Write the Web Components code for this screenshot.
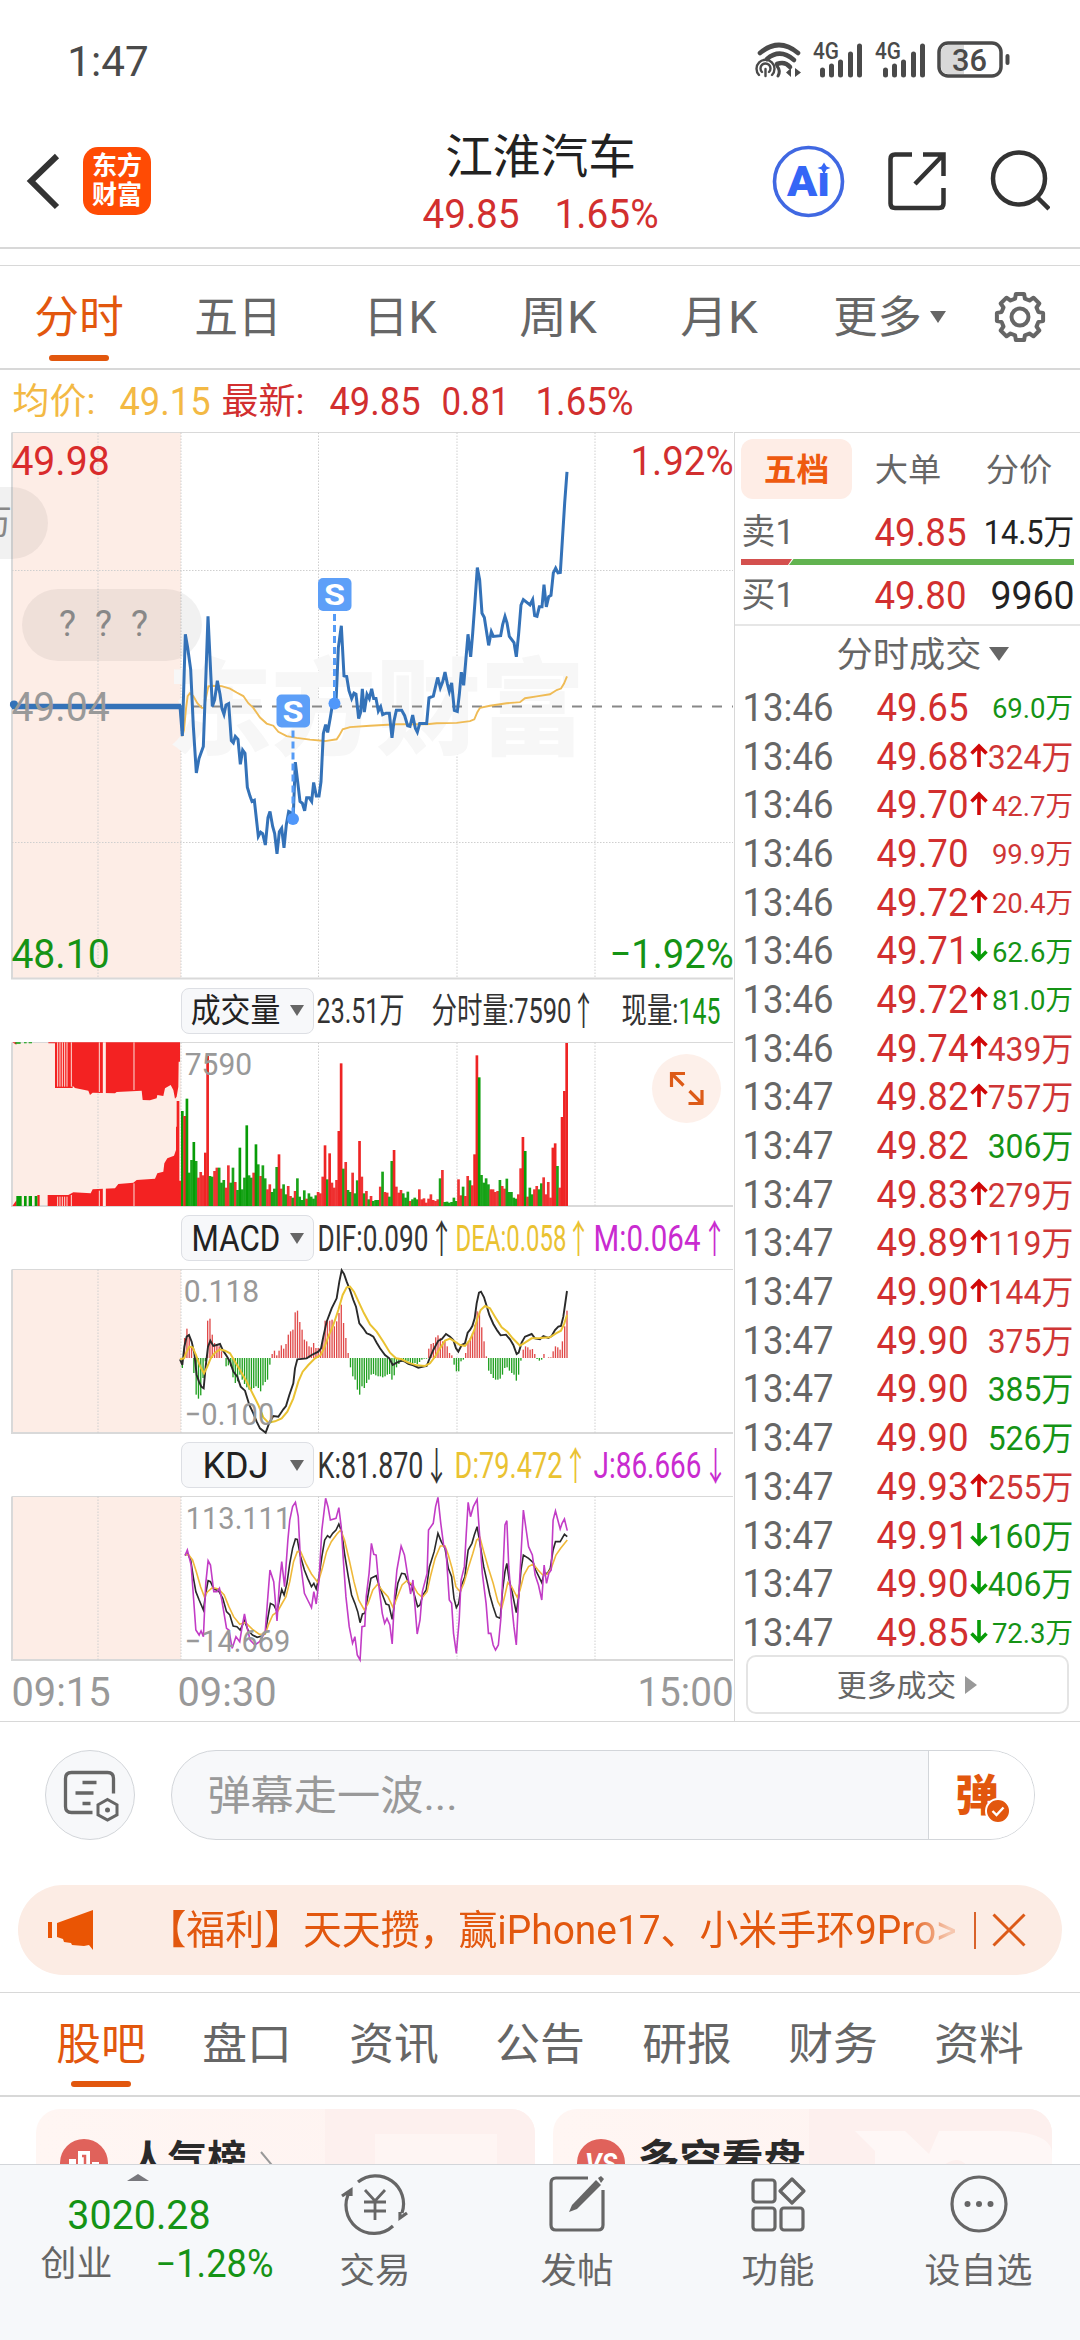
<!DOCTYPE html>
<html lang="zh-CN">
<head>
<meta charset="utf-8">
<title>江淮汽车</title>
<style>
    html, body { margin: 0; padding: 0; }
    body {
        width: 1080px;
        height: 2340px;
        overflow: hidden;
        background: #fff;
        font-family: Roboto, "Noto Sans CJK SC", sans-serif;
        --red: #d22f2f;
        --green: #159315;
        --orange: #e2570e;
        --gray: #666;
        --line: #d8d8d8;
    }
</style>
</head>
<body>
<stock-page></stock-page>

<script>
const FONT = 'Roboto, "Noto Sans CJK SC", sans-serif';

// One line of text set to an exact width, centred on its cap height
class FitText extends HTMLElement {
    connectedCallback() {
        const w = +this.getAttribute('w');
        const s = +this.getAttribute('s');
        const c = this.getAttribute('c') || 'currentColor';
        const b = this.getAttribute('b') || 400;
        const pad = s * 0.04;
        this.attachShadow({ mode: 'open' });
        this.shadowRoot.innerHTML = `
            <style>
                :host { display: block; flex: none; width: ${w}px; height: ${s}px; }
                svg { display: block; overflow: visible; }
                text { font: ${b} ${s}px ${FONT}; white-space: pre; }
            </style>
            <svg width="${w}" height="${s}"><text x="${-pad}" y="${s * 0.86}" fill="${c}" textLength="${w + pad * 2}" lengthAdjust="spacingAndGlyphs">${this.textContent}</text></svg>
        `;
    }
}
customElements.define('fit-text', FitText);

// Shorthand used by the templates below
const t = (text, w, s, ml = 0, c = '', b = '') =>
    `<fit-text w="${w}" s="${s}" ${c && `c="${c}"`} ${b && `b="${b}"`} style="margin-left:${ml}px">${text}</fit-text>`;

class StatusBar extends HTMLElement {
    connectedCallback() {
        this.attachShadow({ mode: 'open' });
        const bars = x => [[0, 67], [9, 63], [18, 59], [28, 51], [37, 43]]
            .map(([dx, y]) => `<path d="M${x + dx + 2.5} ${y + 3}V75"/>`).join('');
        this.shadowRoot.innerHTML = `
            <style>
                :host { display: flex; align-items: center; height: 122px; padding-left: 69px; color: #4a4a4a; }
                svg { margin-left: 604px; flex: none; }
            </style>
            ${t('1:47', 78, 42)}
            <svg width="270" height="122" viewBox="750 0 270 122" fill="none" stroke="#4a4a4a" stroke-width="4.6" stroke-linecap="round">
                <path d="M759 53Q778 37 797 53"/>
                <path d="M766 59Q779 48 793 60"/>
                <path d="M776 64Q784 61 789 67"/>
                <g stroke-width="2.4">
                    <path d="M758 75a9 9 0 1 1 13 0M761 72a5 5 0 1 1 7 0M764.500 69v7"/>
                    <path d="M776 66Q780 71 777 76" stroke-width="3"/>
                </g>
                <path d="M790 68v9l-5-4.500zM794 68v9l6-4.500z" fill="#4a4a4a" stroke="none"/>
                <g stroke-width="5">${bars(819)}${bars(882)}</g>
                <rect x="938" y="43" width="62" height="33" rx="9" stroke-width="3.500"/>
                <path d="M947 45h16v29h-16q-7 0-7-8V53q0-8 7-8z" fill="#d9d9d9" stroke="none"/>
                <path d="M1006.500 56v7" stroke-width="4"/>
                <g fill="#4a4a4a" stroke="none" font-family="Roboto" font-weight="500">
                    <text x="812" y="59" font-size="23" textLength="26" lengthAdjust="spacingAndGlyphs">4G</text>
                    <text x="874" y="59" font-size="23" textLength="26" lengthAdjust="spacingAndGlyphs">4G</text>
                    <text x="951" y="71" font-size="32" textLength="35" lengthAdjust="spacingAndGlyphs">36</text>
                </g>
            </svg>
        `;
    }
}
customElements.define('status-bar', StatusBar);

class TitleBar extends HTMLElement {
    connectedCallback() {
        this.attachShadow({ mode: 'open' });
        this.shadowRoot.innerHTML = `
            <style>
                :host { display: flex; align-items: center; box-sizing: border-box; height: 127px; padding: 0 0 8px 24px; border-bottom: 2px solid var(--line); }
                svg { flex: none; display: block; }
                .logo { display: flex; flex-direction: column; justify-content: center; gap: 3px; width: 68px; height: 68px; margin-left: 19px; border-radius: 15px; background: #ff4b04; align-items: center; }
                .title { width: 233px; margin-left: 272px; padding-top: 6px; color: #222; }
                .title > div { display: flex; }
                .price { margin-top: 14px; color: var(--red); }
            </style>
            <svg width="40" height="60"><path d="M33 5L7 30l26 26" fill="none" stroke="#333" stroke-width="6"/></svg>
            <div class="logo">${t('东方', 48, 26, 0, '#fff', 700)}${t('财富', 48, 26, 0, '#fff', 700)}</div>
            <div class="title">
                <div>${t('江淮汽车', 187, 47, 24)}</div>
                <div class="price">${t('49.85', 94, 40, 1)}${t('1.65%', 101, 40, 38)}</div>
            </div>
            <svg width="280" height="80" viewBox="770 141 280 80" fill="none" stroke="#333" stroke-width="4.500" style="margin-left:114px">
                <circle cx="808.500" cy="181.500" r="34" stroke="#4068e2" stroke-width="3.600"/>
                <path d="M823.500 163l2.500 4 4 1.500-4 1.500-2.500 5-2.500-5-4-1.500 4-1.500z" fill="#3566f6" stroke="none" transform="translate(.5 -.5)"/>
                <text x="787" y="196" font-size="42" font-weight="900" font-family="Roboto" fill="#3566f6" stroke="none" textLength="43" lengthAdjust="spacingAndGlyphs">Aı</text>
                <path d="M912 154.500h-17q-4.500 0-4.500 4.500v44.500q0 4.500 4.500 4.500h44q4.500 0 4.500-4.500V188M923 154.500h20.500V176M943 155L915 184"/>
                <circle cx="1019" cy="178.500" r="26"/>
                <path d="M1037 197l12 12"/>
            </svg>
        `;
    }
}
customElements.define('title-bar', TitleBar);

class PeriodTabs extends HTMLElement {
    connectedCallback() {
        this.attachShadow({ mode: 'open' });
        // eight-toothed gear outline
        let gear = '';
        for (let i = 0; i < 8; i++) {
            [[-15, 19], [-10, 23.5], [10, 23.5], [15, 19]].forEach(([a, r]) => {
                const q = (i * 45 + a - 90) * Math.PI / 180;
                gear += `${gear ? 'L' : 'M'}${(r * Math.cos(q)).toFixed(1)} ${(r * Math.sin(q)).toFixed(1)}`;
            });
        }
        this.shadowRoot.innerHTML = `
            <style>
                :host { display: flex; align-items: center; box-sizing: border-box; height: 105px; margin-top: 16px; padding-left: 36px; border-top: 1.5px solid var(--line); border-bottom: 2px solid var(--line); color: var(--gray); }
                .on { position: relative; color: var(--orange); }
                .on::after { content: ''; position: absolute; left: 13px; top: 60px; width: 60px; height: 6px; border-radius: 3px; background: var(--orange); }
                .caret { margin-left: 10px; border: 8px solid transparent; border-top: 12px solid var(--gray); border-bottom: 0; }
                svg { margin-left: 46px; }
            </style>
            <div class="on">${t('分时', 86, 44)}</div>
            ${t('五日', 84, 44, 74)}${t('日K', 70, 44, 85)}${t('周K', 74, 44, 86)}${t('月K', 74, 44, 87)}${t('更多', 85, 44, 79)}
            <span class="caret"></span>
            <svg width="56" height="56" viewBox="-28 -28 56 56" fill="none" stroke="#666" stroke-width="4" stroke-linejoin="round"><path d="${gear}z"/><circle r="8.500"/></svg>
        `;
    }
}
customElements.define('period-tabs', PeriodTabs);

class QuoteLine extends HTMLElement {
    connectedCallback() {
        this.attachShadow({ mode: 'open' });
        this.shadowRoot.innerHTML = `
            <style>
                :host { display: flex; align-items: center; height: 62px; padding-left: 14px; color: var(--red); }
            </style>
            ${t('均价:', 80, 36, 0, '#f3b944')}${t('49.15', 88, 38, 27, '#f3b944')}
            ${t('最新:', 80, 36, 14)}${t('49.85', 88, 38, 28)}${t('0.81', 65, 38, 24)}${t('1.65%', 95, 38, 29)}
        `;
    }
}
customElements.define('quote-line', QuoteLine);

const label = (text, x, y, w, s, c) =>
    `<text x="${x - s * .04}" y="${y}" font-size="${s}" fill="${c}" textLength="${w + s * .08}" lengthAdjust="spacingAndGlyphs">${text}</text>`;
const frame = (top, bottom) => `
    <rect x="12" y="${top}" width="169" height="${bottom - top}" fill="#fdede6"/>
    <g stroke="#d9d9d9" stroke-width="1.500"><path d="M12 ${top}V${bottom}" stroke-width="2"/><path d="M11 ${bottom}H733" stroke-width="2"/><path d="M12 ${top}H733" stroke-width="1.200"/></g>
    <path d="M98 ${top}V${bottom}M181 ${top}V${bottom}M318.500 ${top}V${bottom}M457 ${top}V${bottom}M595 ${top}V${bottom}" stroke="#cfcfcf" stroke-width="1" stroke-dasharray="1.500 1.500"/>`;
const CHART_CSS = `
    :host { display: block; }
    svg { display: block; overflow: visible; font-family: ${FONT}; }
    polyline { fill: none; vector-effect: non-scaling-stroke; }`;

// Minute price and average price, y of the points in 1/2.8 px, x in 1/3 px
const PRICE = '30,767 45,768 50,774 540,774 547,857 556,572 563,610 572,670 580,830 589,960 597,920 610,886 618,680 624,522 637,774 644,755 652,702 660,740 666,780 672,796 678,770 686,766 694,870 700,876 706,858 714,866 721,936 728,896 735,905 742,1000 750,1025 756,1040 763,1037 775,1138 782,1126 788,1130 796,1162 804,1085 810,1068 818,1110 824,1130 831,1187 838,1125 845,1115 852,1170 859,1105 866,1068 880,1075 886,930 893,985 900,1040 907,1045 914,1066 920,1030 928,1030 935,1040 941,987 949,1025 957,1025 963,985 970,850 977,825 983,847 991,805 998,765 1008,765 1015,610 1024,548 1032,688 1040,690 1047,730 1055,752 1062,737 1068,740 1076,808 1082,790 1087,725 1093,790 1101,740 1108,752 1115,725 1121,752 1128,752 1135,787 1142,775 1148,797 1158,793 1168,793 1176,862 1182,815 1189,785 1205,785 1214,800 1223,828 1230,830 1238,798 1246,835 1252,846 1259,822 1280,822 1287,750 1300,745 1313,693 1321,722 1328,705 1335,678 1342,710 1348,732 1355,708 1363,785 1372,788 1378,740 1384,678 1391,715 1397,650 1404,572 1412,635 1418,570 1425,480 1432,385 1439,420 1446,513 1453,525 1466,603 1474,565 1480,578 1502,576 1508,545 1515,522 1521,540 1528,578 1542,595 1549,635 1556,570 1563,490 1570,475 1590,490 1598,475 1604,520 1611,522 1618,495 1626,495 1632,433 1639,495 1646,467 1653,463 1660,400 1667,387 1674,400 1681,399 1687,310 1694,205 1701,117';
const AVERAGE = '540,775 547,857 552,840 558,780 563,745 570,737 580,745 592,765 605,778 612,778 618,750 625,718 640,716 665,717 690,724 710,735 730,745 745,765 760,778 780,805 800,822 820,828 835,845 860,857 890,862 930,867 975,871 1010,866 1018,855 1028,838 1050,832 1110,828 1190,824 1280,824 1310,821 1370,820 1410,815 1423,810 1432,790 1440,778 1470,772 1520,765 1560,762 1575,751 1610,746 1650,740 1670,728 1683,724 1692,710 1701,690';

class PriceChart extends HTMLElement {
    connectedCallback() {
        this.attachShadow({ mode: 'open' });
        const signal = (x, y, end) => `
            <path d="M${x} ${y + 36}V${end}" stroke="#559bf6" stroke-width="3" stroke-dasharray="7 4"/>
            <circle cx="${x}" cy="${end}" r="6" fill="#4f97fa"/>
            <rect x="${x - 16.5}" y="${y}" width="33.500" height="33" rx="5" fill="#5d9ff8"/>
            <text x="${x - 10.5}" y="${y + 27}" font-size="30" font-weight="700" fill="#fff" textLength="21" lengthAdjust="spacingAndGlyphs">S</text>`;
        this.shadowRoot.innerHTML = `
            <style>${CHART_CSS}</style>
            <svg width="734" height="548" viewBox="0 432 734 548">
                ${frame(432.5, 978.5)}
                <path d="M12 570.500H733M12 842.500H733" stroke="#cfcfcf" stroke-dasharray="1.500 1.500"/>
                <g font-size="105" font-weight="900" fill="#f7f7f7">
                    <text x="167" y="746" textLength="418" lengthAdjust="spacing">东方财富</text>
                </g>
                <path d="M12 706.500H733" stroke="#888" stroke-width="1.800" stroke-dasharray="10 10"/>
                <path d="M0 487h12a36 36 0 0 1 0 72H0z" fill="#000" fill-opacity=".055"/>
                <rect x="22" y="589" width="180" height="72" rx="36" fill="#000" fill-opacity=".055"/>
                <text x="-22" y="534" font-size="34" fill="#888">万</text>
                <g font-size="36" fill="#888"><text x="59" y="636">?</text><text x="95" y="636">?</text><text x="131" y="636">?</text></g>
                <g transform="translate(0 430) scale(.33333 .35714)">
                    <polyline points="${AVERAGE}" stroke="#efbb55" stroke-width="1.900"/>
                    <polyline points="${PRICE}" stroke="#3472b8" stroke-width="3"/>
                </g>
                <path d="M12 706.500H181" stroke="#3472b8" stroke-width="5.500"/>
                <circle cx="14" cy="704.500" r="4" fill="#3472b8"/>
                ${signal(293, 694.5, 819)}
                ${signal(334.5, 578, 703.5)}
                ${label('49.98', 13, 475, 95, 40.5, '#d92b2b')}
                ${label('49.04', 13, 721, 95, 40.5, '#999')}
                ${label('48.10', 13, 967.5, 95, 40.5, '#159315')}
                ${label('1.92%', 632, 475, 100, 40.5, '#d22f2f')}
                ${label('−1.92%', 611, 967.5, 121, 40.5, '#159315')}
            </svg>
        `;
    }
}
customElements.define('price-chart', PriceChart);

class IndicatorHead extends HTMLElement {
    connectedCallback() {
        this.attachShadow({ mode: 'open' });
        this.shadowRoot.innerHTML = `
            <style>
                :host { display: flex; align-items: center; height: 60px; padding-left: 181px; }
                .pick { display: flex; align-items: center; box-sizing: border-box; width: 133px; height: 46px; border: 1px solid #dddfe4; border-radius: 8px; background: #f7f8fa; color: #222; flex: none; }
                .name { width: 95px; display: flex; justify-content: center; margin-left: 6px; }
                .caret { margin-left: 7px; border: 7.500px solid transparent; border-top: 11px solid var(--gray); border-bottom: 0; }
                .values { display: flex; align-items: center; color: #333; }
            </style>
            <div class="pick"><div class="name"><slot name="name"></slot></div><span class="caret"></span></div>
            <div class="values"><slot></slot></div>
        `;
    }
}
customElements.define('indicator-head', IndicatorHead);

// Minute volume: r = rising, g = falling, then the height in 1/3 px
const VOLUME = 'g285 r270 g322 g100 g138 g192 g135 r85 r102 r92 r160 r450 g90 g88 r105 r115 g115 g70 g78 r55 r122 g70 g115 r72 g48 g175 g50 g85 g242 g92 g85 r100 g185 g125 r90 g122 g83 r50 r65 g42 g52 g117 r155 r52 g65 g35 r60 r30 g25 r45 g83 g28 g18 g47 r22 g38 g28 g22 g32 r42 r38 r88 r182 g80 r158 r70 r55 r78 r225 r428 g112 r132 g48 g42 r100 g38 g77 r195 r88 g38 r45 g20 r30 g15 g18 g18 r58 g103 r42 r40 g28 g135 r168 r58 r40 r48 g38 g25 g43 r15 g20 g25 g20 r50 r20 r23 r10 r22 r35 r18 r15 r20 g83 r108 g12 g13 g10 g12 g25 g15 r80 r32 g58 r30 r90 g77 r62 r155 r452 g386 g93 g70 g83 g65 r50 r50 r42 r45 g78 r60 r52 g82 g42 g42 g25 g22 r35 r113 r207 g165 r28 g55 g35 r50 r60 g50 g68 r86 r35 r72 r25 r175 r188 g120 r55 r267 r345 r489'.split(' ');

class VolumeChart extends HTMLElement {
    connectedCallback() {
        this.attachShadow({ mode: 'open' });
        const step = (1700 - 547) / (VOLUME.length - 1);
        const bars = VOLUME.map((v, i) => {
            const h = +v.slice(1);
            return `<rect x="${(543 + i * step).toFixed(1)}" y="${708 - h}" width="8" height="${h}" fill="${v[0] === 'r' ? '#ee2424' : '#079c07'}" ${h < 150 ? 'opacity=".93"' : ''}/>`;
        }).join('');
        this.shadowRoot.innerHTML = `
            <style>${CHART_CSS}</style>
            <svg width="734" height="167" viewBox="0 1041 734 167">
                ${frame(1042.5, 1206)}
                <g transform="translate(0 970) scale(.33333)">
                    <g fill="#f32222">
                        <path d="M165 217V354H218V347L225 354 265 362 270 375 278 368 345 370 350 366 425 362 428 390 450 391 470 385 472 375 490 378 495 355 512 345 520 360 525 386 530 380 535 350 536 275 540 275V217z"/>
                        <path d="M143 708V675H205L220 667 272 670 278 658 345 655 355 642 400 638 410 630 465 626 472 610 490 605 493 580 502 565 522 557 528 540V470H530V393H538V632H543V708z"/>
                        <path d="M37 708l13-18v18zM112 675h7v33h-7zM37 217h12v7zM145 217h20v3h-20z"/>
                    </g>
                    <path d="M49 678h16v30H49zM72 678h8v30h-8zM86 678h10v30H86zM104 678h8v30h-8zM46 217h16v4H46zM72 217h8v3h-8zM86 217h10v3H86z" fill="#079c07"/>
                    <path d="M173 217V350M180 217V350M187 217V350M194 217V350M201 217V350M214 217V350M298 217V366M402 217V360M173 680V708M180 680V708M187 680V708M194 680V708M201 680V708M214 675V708M298 662V708M402 640V708" stroke="#fddfd9" stroke-width="3"/>
                    <path d="M313 217V372M313 650V708" stroke="#fdede6" stroke-width="9"/>
                    ${bars}
                </g>
                ${label('7590', 186, 1075, 65, 31, '#999')}
                <circle cx="686.500" cy="1088.500" r="34.500" fill="#fdf0ea"/>
                <path d="M685 1073.500H671.500V1087M672 1074l11.500 11.500M688.500 1103.500H702V1090M701.500 1103l-12-12" fill="none" stroke="#dd5b18" stroke-width="3.200"/>
            </svg>
        `;
    }
}
customElements.define('volume-chart', VolumeChart);

const MACD = [-30, 60, 88, 70, 30, -45, -110, -122, -112, -60, -10, 112, 118, 70, 45, 40, 35, 20, 0, -25, -22, -25, -58, -75, -70, -50, -65, -78, -88, -95, -95, -90, -85, -90, -100, -82, -72, -65, -20, 12, 22, 8, 22, 38, 28, 42, 70, 80, 85, 137, 142, 108, 85, 55, 50, 35, 32, 45, 30, 30, 30, 60, 112, 110, 112, 115, 95, 110, 135, 160, 105, 60, 15, -28, -55, -65, -95, -110, -85, -90, -75, -65,
    -50, -48, -52, -55, -55, -58, -55, -50, -48, -65, -52, -28, -18, -12, -10, -12, -10, -15, -15, -15, -18, -12, -5, -2, -2, 28, 42, 45, 62, 68, 60, 50, 50, 35, 15, 8, -20, -40, -40, -10, -5, 15, 48, 60, 75, 100, 140, 140, 92, 50, 5, -38, -48, -60, -65, -65, -62, -50, -30, -28, -38, -45, -50, -68, -50, -8, 25, 35, 32, 25, 27, 12, -3, -8, -5, 12, 0, 2, 2, 20, 35, 32, 25, 50, 95, 142];
const DIF = '540,1168 547,1185 553,1130 560,1100 567,1095 575,1115 583,1150 590,1215 597,1235 604,1250 611,1255 617,1190 624,1130 631,1112 640,1128 650,1125 660,1122 668,1140 680,1158 690,1175 700,1205 712,1220 722,1250 735,1262 748,1305 760,1330 770,1355 780,1375 797,1388 808,1358 820,1338 835,1340 850,1318 858,1308 868,1275 880,1240 885,1195 892,1168 920,1165 935,1155 955,1145 963,1135 970,1100 980,1055 995,1015 1010,985 1018,935 1025,901 1032,912 1040,935 1050,960 1060,990 1068,1010 1078,1060 1090,1075 1100,1090 1110,1094 1120,1100 1130,1118 1140,1135 1155,1155 1168,1165 1178,1185 1190,1178 1205,1172 1215,1175 1225,1182 1240,1186 1255,1193 1270,1190 1280,1188 1287,1170 1300,1140 1315,1112 1325,1108 1338,1092 1350,1100 1360,1110 1368,1135 1375,1145 1385,1125 1395,1120 1403,1088 1410,1080 1417,1068 1424,1045 1430,1000 1437,968 1443,965 1452,982 1460,1008 1468,1035 1480,1062 1492,1082 1502,1096 1518,1094 1530,1108 1540,1125 1550,1152 1556,1148 1565,1118 1575,1100 1595,1092 1605,1105 1620,1108 1630,1098 1645,1104 1655,1098 1665,1080 1675,1070 1683,1068 1690,1040 1695,1005 1701,963';
const DEA = '540,1168 552,1165 560,1145 568,1130 578,1132 588,1155 600,1188 612,1210 622,1190 632,1165 645,1148 660,1138 675,1142 690,1150 705,1175 720,1200 740,1235 760,1275 775,1305 790,1342 805,1358 825,1354 845,1345 862,1325 880,1285 895,1235 908,1205 925,1185 945,1165 962,1155 972,1135 985,1100 1000,1065 1015,1020 1028,975 1040,952 1050,950 1062,965 1078,1000 1092,1030 1110,1063 1130,1085 1150,1115 1170,1148 1188,1165 1205,1168 1225,1178 1250,1186 1275,1188 1290,1180 1305,1160 1320,1135 1335,1112 1350,1106 1365,1115 1380,1125 1395,1128 1410,1110 1423,1080 1432,1045 1442,1020 1455,1008 1470,1015 1485,1040 1505,1072 1522,1085 1538,1105 1560,1127 1575,1118 1595,1105 1620,1104 1650,1102 1668,1090 1683,1082 1693,1060 1701,1035';

class MacdChart extends HTMLElement {
    connectedCallback() {
        this.attachShadow({ mode: 'open' });
        const step = (1701 - 547) / (MACD.length - 1);
        const bars = MACD.map((h, i) =>
            `<rect x="${(545 + i * step).toFixed(1)}" y="${h > 0 ? 1164 - h : 1164}" width="4" height="${Math.abs(h)}" fill="${h > 0 ? '#e04a4a' : '#20a020'}"/>`).join('');
        this.shadowRoot.innerHTML = `
            <style>${CHART_CSS}</style>
            <svg width="734" height="167" viewBox="0 1268 734 167">
                ${frame(1269.5, 1433)}
                <g transform="translate(0 970) scale(.33333)">
                    ${bars}
                    <polyline points="${DIF}" stroke="#2a2a2a" stroke-width="1.900"/>
                    <polyline points="${DEA}" stroke="#eac232" stroke-width="2"/>
                </g>
                ${label('0.118', 185, 1302, 73, 31, '#999')}
                ${label('−0.100', 186, 1425, 87, 31, '#999')}
            </svg>
        `;
    }
}
customElements.define('macd-chart', MacdChart);

const KDJ_J = '392,347 397,330 405,375 415,570 422,585 426,573 431,590 436,430 441,362 446,375 453,455 460,455 465,445 470,480 480,565 485,570 492,625 500,590 508,605 513,560 518,522 524,565 530,600 540,615 550,605 562,575 567,480 572,390 580,425 587,543 592,430 597,365 603,440 610,300 614,240 620,200 626,187 632,230 637,370 645,460 652,480 660,503 665,455 670,492 676,420 682,270 690,175 695,200 700,240 712,235 718,203 723,260 728,370 733,470 740,560 747,610 752,590 757,645 763,660 767,560 773,558 776,470 782,400 787,310 792,343 797,345 803,440 810,520 815,550 820,535 826,555 831,612 836,470 841,390 850,318 857,345 862,390 870,462 875,420 880,510 884,582 890,540 895,455 905,400 908,270 918,250 923,200 928,172 934,250 940,315 945,330 952,480 957,490 961,580 967,640 973,540 977,420 984,380 988,280 992,187 997,230 1003,200 1011,178 1016,280 1022,400 1030,490 1035,580 1040,580 1045,615 1050,630 1056,615 1061,540 1065,420 1070,255 1074,242 1078,380 1084,490 1089,560 1094,615 1098,500 1103,370 1109,210 1115,270 1120,320 1128,345 1134,405 1141,435 1148,480 1153,375 1158,430 1163,400 1168,390 1172,240 1177,213 1182,240 1187,267 1191,250 1196,237 1202,272';
const KDJ_K = '392,345 398,342 404,360 410,415 415,455 422,480 431,510 436,460 441,422 446,425 453,447 463,452 472,475 480,515 487,525 494,558 502,560 509,570 518,542 526,572 535,585 545,592 555,588 562,580 568,530 573,490 580,495 587,515 592,480 597,448 602,465 608,430 614,370 620,325 626,297 630,298 636,345 645,390 652,415 660,440 665,430 670,447 676,410 682,350 688,300 694,287 699,293 705,280 712,270 718,252 724,275 730,340 738,410 745,465 752,490 758,515 763,548 768,522 773,520 778,480 786,415 797,407 803,435 812,470 818,492 824,495 831,538 836,490 843,430 851,400 858,402 866,430 872,435 880,475 885,500 890,495 896,465 903,450 910,380 920,335 928,280 935,305 943,325 950,385 957,410 962,475 967,503 972,490 977,440 985,410 992,330 1000,310 1005,285 1011,260 1017,310 1025,380 1032,425 1038,465 1045,500 1052,530 1060,535 1065,450 1070,395 1074,370 1079,420 1085,455 1094,518 1099,470 1104,390 1109,345 1120,355 1130,368 1135,390 1148,428 1153,400 1160,400 1166,385 1172,330 1177,305 1187,305 1196,283 1202,290';
const KDJ_D = '392,343 400,345 408,360 416,395 425,440 433,470 440,455 450,443 463,447 475,465 485,500 495,530 508,553 520,547 535,568 550,583 562,582 570,550 578,525 588,515 597,492 606,470 614,425 622,365 630,335 637,335 648,370 660,402 674,428 683,385 692,335 702,305 714,282 722,270 730,300 740,360 750,425 760,480 772,510 780,490 790,450 800,433 812,455 822,470 833,503 842,470 852,435 862,422 875,435 885,460 895,472 905,455 912,410 922,355 933,318 943,318 950,345 958,385 966,440 975,455 983,430 992,385 1002,340 1010,300 1017,293 1025,335 1035,385 1045,430 1055,485 1063,505 1070,465 1076,428 1084,440 1096,472 1102,450 1110,405 1120,380 1130,372 1140,390 1150,405 1160,402 1168,385 1178,345 1188,325 1202,300';

class KdjChart extends HTMLElement {
    connectedCallback() {
        this.attachShadow({ mode: 'open' });
        this.shadowRoot.innerHTML = `
            <style>${CHART_CSS}</style>
            <svg width="734" height="167" viewBox="0 1495 734 167">
                ${frame(1496.5, 1660)}
                <g transform="translate(0 1440) scale(.47193 .33333)">
                    <polyline points="${KDJ_K}" stroke="#2a2a2a" stroke-width="1.600"/>
                    <polyline points="${KDJ_D}" stroke="#efb93a" stroke-width="1.600"/>
                    <polyline points="${KDJ_J}" stroke="#c23cc6" stroke-width="1.600"/>
                </g>
                ${label('113.111', 187, 1529, 103, 31, '#999')}
                ${label('−14.669', 186, 1652, 103, 31, '#999')}
            </svg>
        `;
    }
}
customElements.define('kdj-chart', KdjChart);

class ChartColumn extends HTMLElement {
    connectedCallback() {
        this.attachShadow({ mode: 'open' });
        const Y = '#eac232', M = '#c92bd0';
        this.shadowRoot.innerHTML = `
            <style>
                :host { display: block; width: 734px; }
                .times { display: flex; align-items: center; height: 60px; padding-left: 13px; color: #999; }
            </style>
            <price-chart></price-chart>
            <indicator-head style="height:61px">
                <div slot="name">${t('成交量', 87, 33)}</div>
                ${t('23.51万', 85, 35, 4)}${t('分时量:7590', 137, 35, 30)}${t('↑', 21, 39, 3)}${t('现量:', 54, 35, 29)}${t('145', 39, 36, 3, '#159315')}
            </indicator-head>
            <volume-chart></volume-chart>
            <indicator-head>
                <div slot="name">${t('MACD', 86, 36)}</div>
                ${t('DIF:0.090', 108, 36, 5)}${t('↑', 21, 39, 4)}${t('DEA:0.058', 108, 36, 5, Y)}${t('↑', 21, 39, 3, Y)}${t('M:0.064', 104, 36, 6, M)}${t('↑', 21, 39, 5, M)}
            </indicator-head>
            <macd-chart></macd-chart>
            <indicator-head>
                <div slot="name">${t('KDJ', 63, 36)}</div>
                ${t('K:81.870', 103, 36, 5)}${t('↓', 21, 39, 4)}${t('D:79.472', 105, 36, 9, Y)}${t('↑', 21, 39, 4, Y)}${t('J:86.666', 105, 36, 9, M)}${t('↓', 21, 39, 5, M)}
            </indicator-head>
            <kdj-chart></kdj-chart>
            <div class="times">${t('09:15', 96, 40)}${t('09:30', 96, 40, 70)}${t('15:00', 93, 40, 364)}</div>
        `;
    }
}
customElements.define('chart-column', ChartColumn);

// time, price, move, volume, colour
const TRADES = [
    ['13:46', '49.65', '', '69.0万', 'g'], ['13:46', '49.68', 'up', '324万', 'r'],
    ['13:46', '49.70', 'up', '42.7万', 'r'], ['13:46', '49.70', '', '99.9万', 'r'],
    ['13:46', '49.72', 'up', '20.4万', 'r'], ['13:46', '49.71', 'down', '62.6万', 'g'],
    ['13:46', '49.72', 'up', '81.0万', 'g'], ['13:46', '49.74', 'up', '439万', 'r'],
    ['13:47', '49.82', 'up', '757万', 'r'], ['13:47', '49.82', '', '306万', 'g'],
    ['13:47', '49.83', 'up', '279万', 'r'], ['13:47', '49.89', 'up', '119万', 'r'],
    ['13:47', '49.90', 'up', '144万', 'r'], ['13:47', '49.90', '', '375万', 'r'],
    ['13:47', '49.90', '', '385万', 'g'], ['13:47', '49.90', '', '526万', 'g'],
    ['13:47', '49.93', 'up', '255万', 'r'], ['13:47', '49.91', 'down', '160万', 'g'],
    ['13:47', '49.90', 'down', '406万', 'g'], ['13:47', '49.85', 'down', '72.3万', 'g'],
];
const MOVES = {
    '': '',
    up: '<path d="M12 24V3M4.500 10.500L12 3l7.500 7.500" stroke="#d00808"/>',
    down: '<path d="M12 1V22M4.500 14.500L12 22l7.500-7.500" stroke="#079c07"/>',
};

class OrderPanel extends HTMLElement {
    connectedCallback() {
        this.attachShadow({ mode: 'open' });
        const rows = TRADES.map(([time, price, move, vol, c]) => {
            const color = c === 'r' ? '#cf3636' : '#159315';
            const small = vol.includes('.');
            return `<div class="row">${t(time, 88, 38, 9, '#666')}${t(price, 89, 38, 46, '#d22f2f')}<svg width="23" height="26">${MOVES[move]}</svg><span>${t(vol, small ? 79 : 83, small ? 28 : 33, 0, color)}</span></div>`;
        }).join('');
        this.shadowRoot.innerHTML = `
            <style>
                :host { display: block; box-sizing: border-box; width: 346px; border-left: 1.500px solid var(--line); color: var(--gray); }
                .tabs { display: flex; align-items: center; padding: 6px 0 0 6px; height: 60px; }
                .on { display: flex; align-items: center; justify-content: center; width: 111px; height: 60px; border-radius: 12px; background: #feede6; }
                .quote { display: flex; align-items: center; box-sizing: border-box; height: 60px; }
                .sell { padding-top: 5px; }
                .ratio { display: block; margin-left: 6px; }
                .head { display: flex; align-items: center; justify-content: center; height: 56.500px; border-top: 2px solid #e6e6e6; padding-left: 32px; }
                .head b { border: 10.500px solid transparent; border-top: 14px solid var(--gray); border-bottom: 0; margin: 0 0 0 9px; }
                .row { display: flex; align-items: center; height: 48.700px; }
                .row svg { flex: none; fill: none; stroke-width: 3.600; }
                .row span { display: flex; justify-content: flex-end; width: 82px; padding-top: 3px; }
                .more { display: flex; align-items: center; justify-content: center; box-sizing: border-box; width: 323px; height: 59px; margin: -1px 0 0 11px; border: 2px solid #e4e4e4; border-radius: 10px; }
                .more b { margin-left: 10px; border: 9.500px solid transparent; border-left: 12px solid #999; border-right: 0; }
            </style>
            <div class="tabs"><div class="on">${t('五档', 63, 32, 0, '#ee5a10', 700)}</div>${t('大单', 64, 32, 24)}${t('分价', 64, 32, 47)}</div>
            <div class="quote sell">${t('卖1', 50, 35, 8)}${t('49.85', 89, 38, 83, '#d22f2f')}${t('14.5万', 88, 34, 20, '#222')}</div>
            <svg class="ratio" width="333" height="6"><path d="M0 0H51L47 6H0z" fill="#d4504e"/><path d="M52.500 0H333V6H48z" fill="#62b350"/></svg>
            <div class="quote" style="height:59px">${t('买1', 50, 35, 8)}${t('49.80', 89, 38, 83, '#d22f2f')}${t('9960', 81, 38, 27, '#222')}</div>
            <div class="head">${t('分时成交', 142, 35)}<b></b></div>
            ${rows}
            <div class="more">${t('更多成交', 117, 30)}<b></b></div>
        `;
    }
}
customElements.define('order-panel', OrderPanel);

class DanmuBar extends HTMLElement {
    connectedCallback() {
        this.attachShadow({ mode: 'open' });
        this.shadowRoot.innerHTML = `
            <style>
                :host { display: flex; padding: 28px 0 0 45px; }
                .round { box-sizing: border-box; width: 90px; height: 90px; border: 1.500px solid #d3d6da; border-radius: 50%; background: #f7f8fa; }
                .input { display: flex; box-sizing: border-box; width: 864px; height: 90px; margin-left: 36px; border: 1.500px solid #d3d6da; border-radius: 45px; background: #f7f8fa; overflow: hidden; align-items: center; }
                .send { display: flex; align-items: center; align-self: stretch; flex: 1; margin-left: 472px; border-left: 1.500px solid #d3d6da; background: #fff; position: relative; }
                .send svg { position: absolute; left: 55px; top: 46px; }
            </style>
            <div class="round">
                <svg width="88" height="88" viewBox="46.500 1751.500 88 88" fill="none" stroke="#666" stroke-width="3.300">
                    <path d="M93 1813H72q-6 0-6-6v-28q0-6 6-6h36q6 0 6 6v15"/>
                    <path d="M83 1783h14M76 1793.500h18M83 1804h8"/>
                    <path d="M108 1800l9.500 5.300v10L108 1820.500l-9.500-5.200v-10z" stroke-width="3"/>
                    <circle cx="108" cy="1810.500" r="2.500" fill="#666" stroke="none"/>
                </svg>
            </div>
            <div class="input">
                ${t('弹幕走一波...', 247, 41, 37, '#999')}
                <div class="send">${t('弹', 40, 43, 28, '#e2570e', 900)}
                    <svg width="28" height="28"><circle cx="14" cy="14" r="12" fill="#e2570e" stroke="#fff" stroke-width="2"/><path d="M8.500 14l4 4 7-7.500" fill="none" stroke="#fff" stroke-width="2.400"/></svg>
                </div>
            </div>
        `;
    }
}
customElements.define('danmu-bar', DanmuBar);

class PromoBanner extends HTMLElement {
    connectedCallback() {
        this.attachShadow({ mode: 'open' });
        this.shadowRoot.innerHTML = `
            <style>
                :host { display: flex; align-items: center; width: 1044px; height: 90px; margin: 45px 0 17px 18px; border-radius: 45px; background: #fcece4; color: var(--orange); }
                svg { flex: none; }
                .msg { margin-left: 53px; width: 811px; flex: none; -webkit-mask-image: linear-gradient(90deg, #000 757px, rgba(0, 0, 0, .25) 800px); padding: 8px 0; }
                .bar { width: 1.500px; height: 37px; background: #d9622a; margin-left: 14px; }
            </style>
            <svg width="48" height="44" style="margin-left:30px" fill="#ea5504"><path d="M0 14h4v16H0zM9 15L45 2V42L41 37 36 38 24 37 23 35 16 34 15 31 9 29z"/></svg>
            <div class="msg">${t('【福利】天天攒，赢iPhone17、小米手环9Pro&gt;', 806, 40)}</div>
            <div class="bar"></div>
            <svg width="34" height="34" style="margin-left:16px" stroke="#dc5a18" stroke-width="3"><path d="M1.500 1.500l31 31M32.500 1.500l-31 31"/></svg>
        `;
    }
}
customElements.define('promo-banner', PromoBanner);

class SectionTabs extends HTMLElement {
    connectedCallback() {
        this.attachShadow({ mode: 'open' });
        this.shadowRoot.innerHTML = `
            <style>
                :host { display: flex; align-items: center; box-sizing: border-box; height: 105px; padding-left: 58px; border-top: 1.500px solid var(--line); border-bottom: 2px solid var(--line); color: var(--gray); }
                .on { position: relative; color: var(--orange); }
                .on::after { content: ''; position: absolute; left: 13px; top: 59px; width: 60px; height: 6px; border-radius: 3px; background: #e2570e; }
            </style>
            <div class="on">${t('股吧', 86, 44)}</div>
            ${['盘口', '资讯', '公告', '研报', '财务', '资料'].map(n => t(n, 86, 44, 60.4)).join('')}
        `;
    }
}
customElements.define('section-tabs', SectionTabs);

class HotCards extends HTMLElement {
    connectedCallback() {
        this.attachShadow({ mode: 'open' });
        this.shadowRoot.innerHTML = `
            <style>
                :host { display: flex; gap: 18px; box-sizing: border-box; height: 67px; padding: 12px 0 0 36px; overflow: hidden; }
                .card { position: relative; display: flex; box-sizing: border-box; width: 499px; height: 150px; border-radius: 24px 24px 0 0; overflow: hidden; background: linear-gradient(90deg, #fff6f3, #fef3f1); padding: 30px 0 0 24px; color: #2a2a2a; }
                .deco { position: absolute; right: 0; top: 0; }
                svg { flex: none; }
                fit-text { position: relative; }
            </style>
            <div class="card">
                <svg class="deco" width="210" height="60"><path d="M0 0H210V60H0z" fill="#fdf0ee"/><path d="M50 25H172V60H50z" fill="#fef5f3"/><path d="M74 55h76v5H74z" fill="#fdeceb"/></svg>
                <svg width="48" height="48"><circle cx="24" cy="24" r="24" fill="#e0625b"/><path d="M18 12h12v26H18zM9 20h7v18H9zM32 23h7v15h-7z" fill="#fff"/><path d="M22 17h3v9" fill="none" stroke="#e0625b" stroke-width="2.500"/></svg>
                ${t('人气榜', 115, 39, 22, '', 700)}
                <svg width="20" height="40" style="margin-left:14px"><path d="M2 13L12 25 2 37" fill="none" stroke="#999" stroke-width="2"/></svg>
            </div>
            <div class="card">
                <svg class="deco" width="243" height="60"><path d="M0 0H243V60H0z" fill="#fdf0ee"/><path d="M46 22H96L120 45 130 22H190Q243 22 243 45V60H160Q150 42 130 60H66V42z" fill="#fef7f6"/></svg>
                <svg width="48" height="48"><circle cx="24" cy="24" r="24" fill="#e0625b"/><text x="8" y="34" font-family="Roboto" font-size="28" font-weight="700" font-style="italic" fill="#fff" textLength="32" lengthAdjust="spacingAndGlyphs">VS</text></svg>
                ${t('多空看盘', 165, 41, 14, '', 700)}
            </div>
        `;
    }
}
customElements.define('hot-cards', HotCards);

class BottomNav extends HTMLElement {
    connectedCallback() {
        this.attachShadow({ mode: 'open' });
        const item = (name, w, x, icon) =>
            `<div class="item" style="margin-left:${x}px;width:${w}px"><svg width="68" height="64" viewBox="-34 -32 68 64" fill="none" stroke="#666" stroke-width="3.200">${icon}</svg>${t(name, w, 35)}</div>`;
        this.shadowRoot.innerHTML = `
            <style>
                :host { display: flex; box-sizing: border-box; height: 177px; border-top: 1.500px solid #d3d6da; background: #f6f8fa; color: var(--gray); }
                .index { width: 272px; padding-top: 9px; flex: none; }
                .up { display: block; width: 0; margin-left: 127px; border: 11px solid transparent; border-bottom: 7px solid #77777c; border-top: 0; }
                .row { display: flex; align-items: center; }
                .item { display: flex; flex-direction: column; align-items: center; flex: none; padding-top: 7px; gap: 17px; }
                svg { flex: none; }
            </style>
            <div class="index">
                <span class="up"></span>
                <div class="row" style="margin-top:13px">${t('3020.28', 140, 41, 69, '#159315')}</div>
                <div class="row" style="margin-top:9px">${t('创业', 69, 35, 42)}${t('−1.28%', 115, 38, 46, '#159315')}</div>
            </div>
            ${item('交易', 68, 69, '<path d="M-17 -22A28 28 0 0 1 27 9M18 22A28 28 0 0 1 -25 -13M-33 -8L-24 -14V-8M32 9L25 14V8"/><path d="M-10 -14L0 -3 10 -14M-11 -2H11M-11 7H11M0 -3V16" stroke-width="2.800"/>')}
            ${item('发帖', 70, 133, '<path d="M11 -26H-21q-5 0-5 5V21q0 5 5 5H21q5 0 5-5V-14" /><path d="M-8 8l3-7L19 -24l5 5L0 5z" fill="#666" stroke="none"/><path d="M21 -26l3-2 3 3-3 4z" fill="#666" stroke="none"/>')}
            ${item('功能', 70, 131, '<rect x="-25" y="-24" width="22" height="22" rx="3"/><rect x="-25" y="4" width="22" height="22" rx="3"/><rect x="3" y="4" width="22" height="22" rx="3"/><path d="M14 -25L26 -13 14 -1 2 -13z" stroke-linejoin="round"/>')}
            ${item('设自选', 105, 113, '<circle r="27"/><g fill="#666" stroke="none"><circle cx="-11.500" r="3"/><circle r="3"/><circle cx="11.500" r="3"/></g>')}
        `;
    }
}
customElements.define('bottom-nav', BottomNav);

class StockPage extends HTMLElement {
    connectedCallback() {
        this.attachShadow({ mode: 'open' });
        this.shadowRoot.innerHTML = `
            <style>
                :host { display: block; width: 1080px; height: 2340px; overflow: hidden; }
                .main { display: flex; box-sizing: border-box; height: 1290px; border-bottom: 1.500px solid var(--line); }
                order-panel { border-top: 1px solid var(--line); }
            </style>
            <status-bar></status-bar>
            <title-bar></title-bar>
            <period-tabs></period-tabs>
            <quote-line></quote-line>
            <div class="main"><chart-column></chart-column><order-panel></order-panel></div>
            <danmu-bar></danmu-bar>
            <promo-banner></promo-banner>
            <section-tabs></section-tabs>
            <hot-cards></hot-cards>
            <bottom-nav></bottom-nav>
        `;
    }
}
customElements.define('stock-page', StockPage);
</script>
</body>
</html>
